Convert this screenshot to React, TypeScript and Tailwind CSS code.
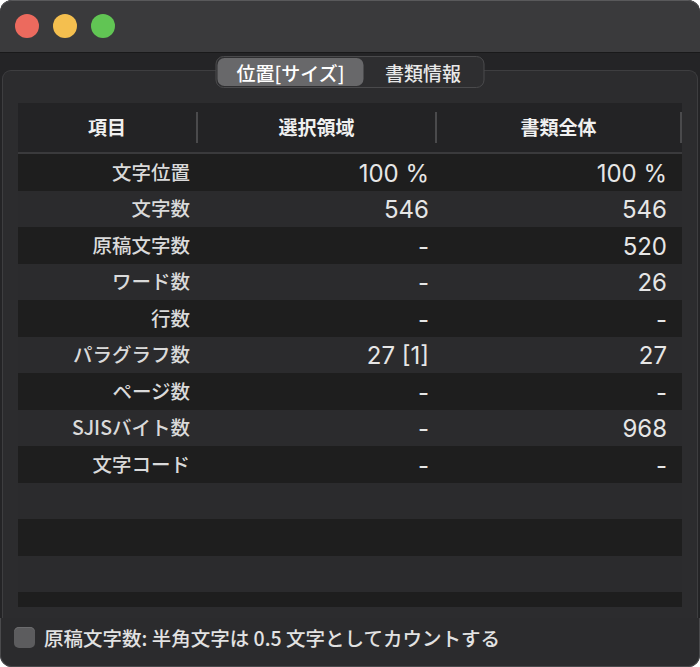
import { useState } from "react";

const rows = [
  { label: "文字位置", sel: "100 %", doc: "100 %" },
  { label: "文字数", sel: "546", doc: "546" },
  { label: "原稿文字数", sel: "-", doc: "520" },
  { label: "ワード数", sel: "-", doc: "26" },
  { label: "行数", sel: "-", doc: "-" },
  { label: "パラグラフ数", sel: "27 [1]", doc: "27" },
  { label: "ページ数", sel: "-", doc: "-" },
  { label: "SJISバイト数", sel: "-", doc: "968" },
  { label: "文字コード", sel: "-", doc: "-" },
  { label: "", sel: "", doc: "" },
  { label: "", sel: "", doc: "" },
  { label: "", sel: "", doc: "" },
  { label: "", sel: "", doc: "" },
];

const jp = "font-['Noto_Sans_CJK_JP','Noto_Sans',sans-serif]";
const num = "font-['Inter','Noto_Sans_CJK_JP',sans-serif]";

export default function App() {
  const [tab, setTab] = useState(0);
  const [halfWidth, setHalfWidth] = useState(false);

  return (
    <div className={`w-[700px] h-[667px] bg-white ${jp}`}>
      <div className="w-full h-full rounded-[12px] overflow-hidden bg-[#2b2b2d] flex flex-col shadow-[inset_0_0_0_1px_#4a4a4c]">
        {/* title bar */}
        <div className="h-[53px] shrink-0 bg-[#3a3a3c] border-b border-[#19191a] flex items-center gap-[14px] pl-[15px] rounded-t-[12px] shadow-[inset_0_1px_0_#59595b]">
          <span className="w-[24px] h-[24px] rounded-full bg-[#ec6a5e]" />
          <span className="w-[24px] h-[24px] rounded-full bg-[#f4bf4f]" />
          <span className="w-[24px] h-[24px] rounded-full bg-[#61c554]" />
        </div>

        <div className="bg-[#242426] pt-[17px] px-[2px]">
          {/* group box */}
          <div className="relative h-[548px] rounded-t-[9px] border border-b-0 border-[#3e3e40] bg-[#2c2c2e] px-[15px] pt-[32px]">
            <div className="absolute left-1/2 -translate-x-1/2 top-[-15px] flex h-[32px] w-[269px] rounded-[8px] border border-[#4a4a4c] bg-[#2e2e30] p-[1px] text-[19px] font-medium leading-none">
              <button
                onClick={() => setTab(0)}
                className={`w-[146px] rounded-[7px] ${tab === 0 ? "bg-[#68686a] text-white" : "text-[#e8e8e8]"}`}
              >
                位置[サイズ]
              </button>
              <button
                onClick={() => setTab(1)}
                className={`flex-1 rounded-[7px] ${tab === 1 ? "bg-[#68686a] text-white" : "text-[#e8e8e8]"}`}
              >
                書類情報
              </button>
            </div>

            <div className="h-[504px] overflow-hidden bg-[#1e1e1e]">
              <div className="grid grid-cols-[180px_239px_245px] h-[51px] bg-[#232325] border-b-[2px] border-[#3a3a3c] text-[19px] font-bold text-[#f0f0f0]">
                <div className="flex items-center justify-center border-r-2 border-[#4a4a4c] my-[9px]">項目</div>
                <div className="flex items-center justify-center border-r-2 border-[#4a4a4c] my-[9px]">選択領域</div>
                <div className="flex items-center justify-center border-r-2 border-[#4a4a4c] my-[9px]">書類全体</div>
              </div>
              {rows.map((r, i) => (
                <div
                  key={i}
                  className={`grid grid-cols-[180px_239px_245px] h-[36.5px] items-center leading-none ${i % 2 === 0 ? "bg-[#1e1e1e]" : "bg-[#2b2b2d]"}`}
                >
                  <div className="text-right pr-[8px] pb-[2px] text-[19.5px] font-medium text-[#dadada]">{r.label}</div>
                  <div className={`text-right pr-[8px] pt-[3px] text-[24px] text-[#e6e6e6] ${num}`}>{r.sel}</div>
                  <div className={`text-right pr-[15px] pt-[3px] text-[24px] text-[#e6e6e6] ${num}`}>{r.doc}</div>
                </div>
              ))}
            </div>
          </div>
        </div>

        <label className="flex items-center gap-[9px] pl-[14px] pt-[9px] text-[19.5px] font-medium leading-none text-[#e2e2e2] cursor-pointer">
          <span
            onClick={() => setHalfWidth(!halfWidth)}
            className="w-[21px] h-[21px] rounded-[5px] bg-[#5c5c5e] shadow-[inset_0_1px_0_#6c6c6e]"
          />
          原稿文字数: 半角文字は 0.5 文字としてカウントする
        </label>
      </div>
    </div>
  );
}
